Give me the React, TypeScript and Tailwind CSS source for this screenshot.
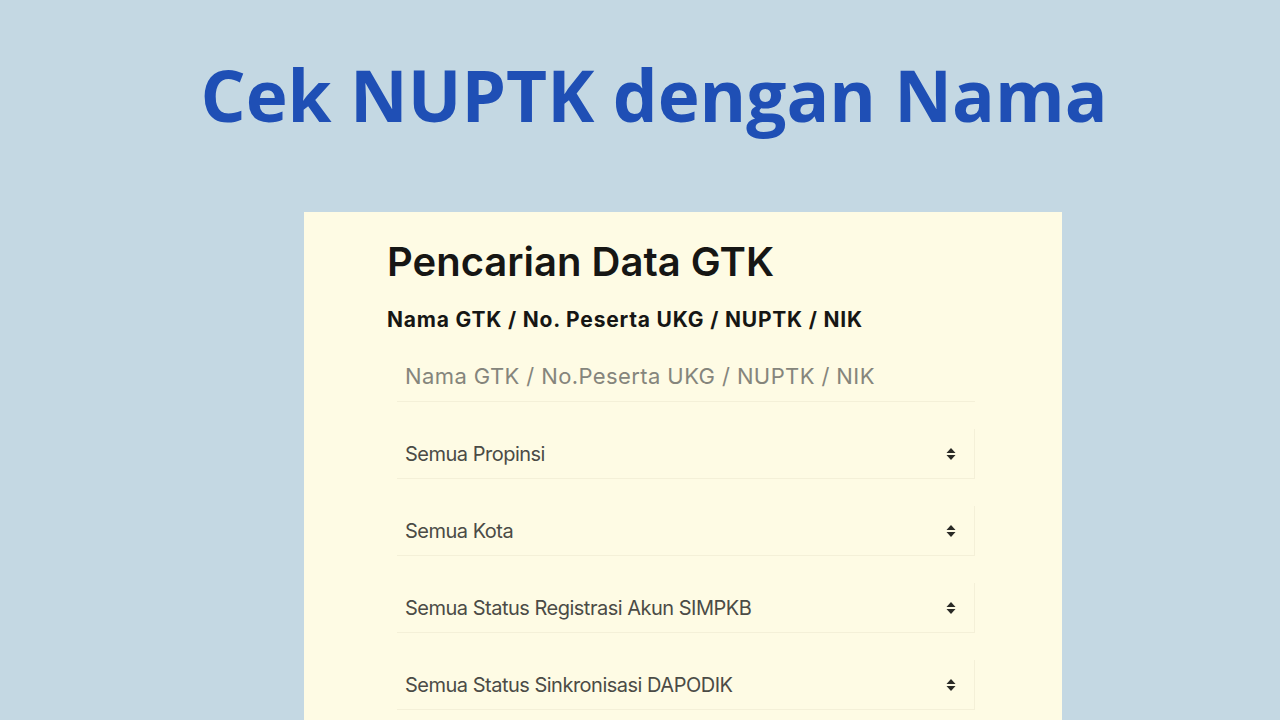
import React from 'react';

const selects = [
  'Semua Propinsi',
  'Semua Kota',
  'Semua Status Registrasi Akun SIMPKB',
  'Semua Status Sinkronisasi DAPODIK',
];

const SortArrows: React.FC = () => (
  <svg width="10" height="14" viewBox="0 0 10 14" className="text-[#2a2a26]">
    <path d="M5 1 L9.5 6 H0.5 Z" fill="currentColor" />
    <path d="M5 13 L9.5 8 H0.5 Z" fill="currentColor" />
  </svg>
);

export default function App() {
  return (
    <div className="w-[1280px] h-[720px] overflow-hidden bg-[#c4d8e3] flex flex-col">
      <h1
        className="pt-[47px] pl-[28px] text-center text-[71px] leading-[96px] font-bold text-[#1f4fb5]"
        style={{ fontFamily: '"Open Sans", sans-serif' }}
      >
        Cek NUPTK dengan Nama
      </h1>

      <div
        className="mt-[69px] ml-[304px] w-[758px] flex-1 bg-[#fefbe4] px-[83px] pt-[26px]"
        style={{ fontFamily: 'Inter, sans-serif' }}
      >
        <h2 className="text-[40px] leading-[48px] font-semibold text-[#161614]">
          Pencarian Data GTK
        </h2>
        <div className="mt-[22px] text-[21px] leading-[24px] font-bold text-[#161614] tracking-[0.8px]">
          Nama GTK / No. Peserta UKG / NUPTK / NIK
        </div>

        <div className="mt-[20px] ml-[10px] w-[578px] flex flex-col gap-[27px]">
          <div className="h-[50px] flex items-center px-[8px] border-b border-[#f4f0d8] text-[22px] tracking-[0.4px] text-[#85857c]">
            Nama GTK / No.Peserta UKG / NUPTK / NIK
          </div>
          {selects.map((s) => (
            <div
              key={s}
              className="h-[50px] flex items-center justify-between pl-[8px] pr-[18px] border-b border-r border-[#f4f0d8] text-[20px] tracking-[-0.5px] text-[#4b4b46]"
            >
              <span>{s}</span>
              <SortArrows />
            </div>
          ))}
        </div>
      </div>
    </div>
  );
}
